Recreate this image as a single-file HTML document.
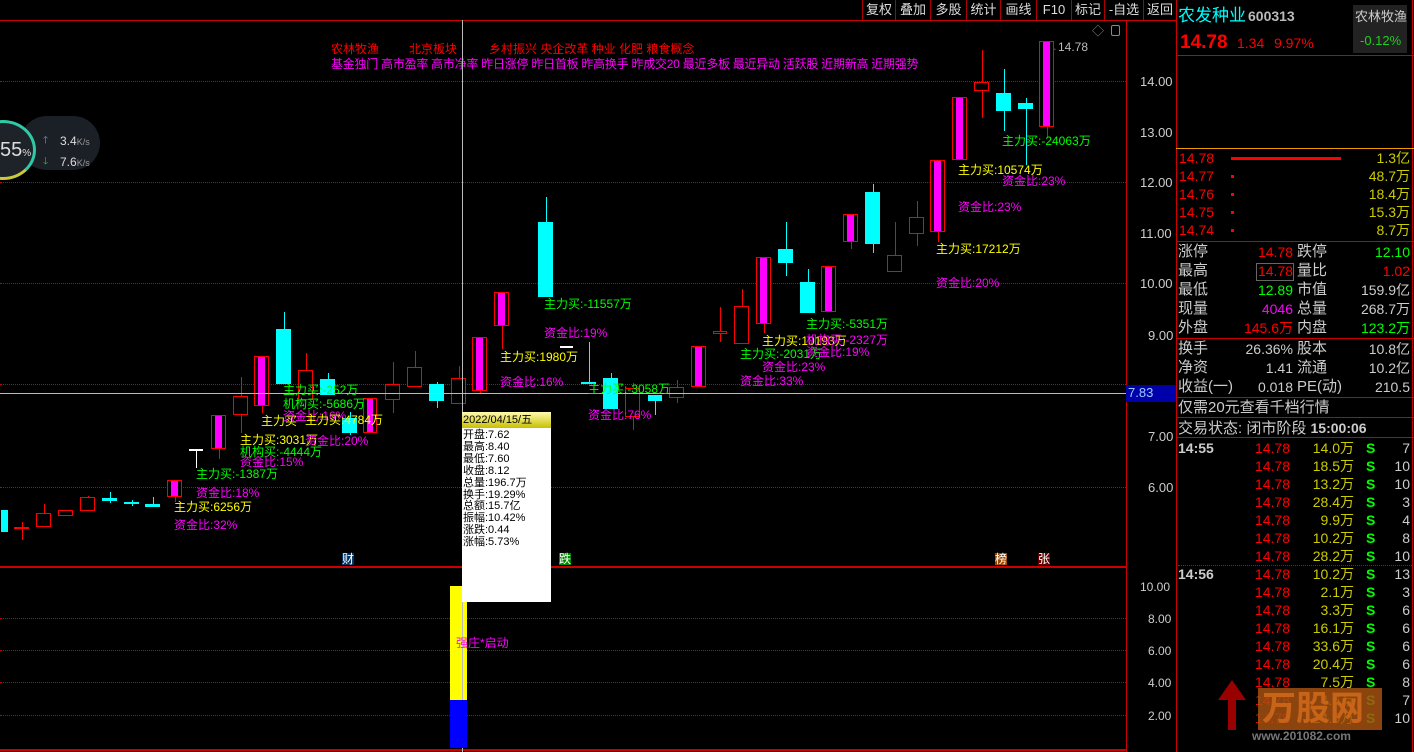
<!DOCTYPE html>
<html><head><meta charset="utf-8">
<style>
*{margin:0;padding:0;box-sizing:border-box}
body{width:1414px;height:752px;background:#000;position:relative;overflow:hidden;font-family:"Liberation Sans","Noto Sans CJK SC",sans-serif;color:#ddd}
.a{position:absolute;white-space:nowrap}
.t{position:absolute;white-space:nowrap;font-size:12px;line-height:12px}
.dot{position:absolute;height:0;border-top:1px dotted #c00}
.btn{position:absolute;top:0;height:20px;font-size:13px;line-height:20px;color:#ddd;text-align:center;border-left:1px solid #a00}
.rp{position:absolute;font-size:15px;line-height:18px;font-family:"Liberation Sans","Noto Sans CJK SC",sans-serif}
.hl{position:absolute;left:1176px;width:238px;height:1px;background:#c00}
.y{color:#ff0}.g{color:#0f0}.m{color:#f0f}.r{color:#f00}.w{color:#ccc}.c{color:#0ff}
</style></head><body>

<!-- top toolbar -->
<div class="a" style="left:0;top:20px;width:1176px;height:1px;background:#c00"></div>
<div class="btn" style="left:862px;width:33px">复权</div>
<div class="btn" style="left:895px;width:35px">叠加</div>
<div class="btn" style="left:930px;width:36px">多股</div>
<div class="btn" style="left:966px;width:34px">统计</div>
<div class="btn" style="left:1000px;width:36px">画线</div>
<div class="btn" style="left:1036px;width:35px">F10</div>
<div class="btn" style="left:1071px;width:33px">标记</div>
<div class="btn" style="left:1104px;width:39px">-自选</div>
<div class="btn" style="left:1143px;width:33px">返回</div>

<!-- axis lines -->
<div class="a" style="left:1126px;top:20px;width:1px;height:732px;background:#c00"></div>
<div class="a" style="left:1176px;top:0;width:1px;height:752px;background:#c00"></div>
<div class="a" style="left:1412px;top:0;width:1px;height:752px;background:#c00"></div>
<div class="a" style="left:0;top:566px;width:1126px;height:2px;background:#c00"></div>
<div class="a" style="left:0;top:749px;width:1126px;height:2px;background:#c00"></div>

<!-- grid -->
<div class="dot" style="left:0;top:81px;width:1126px"></div>
<div class="dot" style="left:0;top:182px;width:1126px"></div>
<div class="dot" style="left:0;top:283px;width:1126px"></div>
<div class="dot" style="left:0;top:384px;width:1126px"></div>
<div class="dot" style="left:0;top:487px;width:1126px"></div>
<div class="dot" style="left:0;top:618px;width:1126px"></div>
<div class="dot" style="left:0;top:650px;width:1126px"></div>
<div class="dot" style="left:0;top:682px;width:1126px"></div>
<div class="dot" style="left:0;top:715px;width:1126px"></div>

<!-- axis labels -->
<div class="t w" style="left:1140px;top:76px;font-size:13px">14.00</div>
<div class="t w" style="left:1140px;top:127px;font-size:13px">13.00</div>
<div class="t w" style="left:1140px;top:177px;font-size:13px">12.00</div>
<div class="t w" style="left:1140px;top:228px;font-size:13px">11.00</div>
<div class="t w" style="left:1140px;top:278px;font-size:13px">10.00</div>
<div class="t w" style="left:1148px;top:330px;font-size:13px">9.00</div>
<div class="t w" style="left:1148px;top:431px;font-size:13px">7.00</div>
<div class="t w" style="left:1148px;top:482px;font-size:13px">6.00</div>
<div class="a" style="left:1126px;top:385px;width:50px;height:17px;background:#00a"></div>
<div class="t" style="left:1128px;top:387px;color:#9cf;font-size:13px">7.83</div>
<div class="t w" style="left:1140px;top:581px">10.00</div>
<div class="t w" style="left:1148px;top:613px">8.00</div>
<div class="t w" style="left:1148px;top:645px">6.00</div>
<div class="t w" style="left:1148px;top:677px">4.00</div>
<div class="t w" style="left:1148px;top:710px">2.00</div>

<!-- tags -->
<div class="t r" style="left:331px;top:43px">农林牧渔</div>
<div class="t r" style="left:409px;top:43px">北京板块</div>
<div class="t r" style="left:489px;top:43px">乡村振兴 央企改革 种业 化肥 粮食概念</div>
<div class="t m" style="left:331px;top:58px;letter-spacing:-0.25px">基金独门 高市盈率 高市净率 昨日涨停 昨日首板 昨高换手 昨成交20 最近多板 最近异动 活跃股 近期新高 近期强势</div>
<div class="t w" style="left:1092px;top:25px;color:#888">◇</div>
<div class="a" style="left:1111px;top:25px;width:9px;height:11px;border:1px solid #888;border-radius:2px"></div>
<div class="t w" style="left:1046px;top:41px;color:#bbb">←14.78</div>

<!-- speed widget -->
<div class="a" style="left:20px;top:116px;width:80px;height:54px;background:#1b1f26;border-radius:27px"></div>
<div class="a" style="left:-30px;top:120px;width:66px;height:60px;border-radius:50%;background:#1e2229;border:3px solid #2fc9a5;border-left-color:#1e2229;border-bottom-color:#c9c93a"></div>
<div class="t" style="left:0;top:140px;font-size:20px;line-height:20px;color:#ddd">55<span style="font-size:10px">%</span></div>
<div class="t" style="left:43px;top:135px;color:#3af;font-size:10px">🡑</div>
<div class="t" style="left:43px;top:156px;color:#2c2;font-size:10px">🡓</div>
<div class="t" style="left:60px;top:135px;color:#ddd">3.4<span style="font-size:9px;color:#999">K/s</span></div>
<div class="t" style="left:60px;top:156px;color:#ddd">7.6<span style="font-size:9px;color:#999">K/s</span></div>

<div id="ch"></div>

<!-- crosshair -->
<div class="a" style="left:462px;top:20px;width:1px;height:732px;background:#bbb"></div>
<div class="a" style="left:0;top:393px;width:1126px;height:1px;background:#bbb"></div>

<!-- annotations -->
<div id="an"></div>

<!-- info box -->
<div class="a" style="left:462px;top:412px;width:89px;height:190px;background:#fff"></div>
<div class="a" style="left:462px;top:412px;width:89px;height:16px;background:linear-gradient(#fffbb0,#c8c000)"></div>
<div class="t" style="left:463px;top:414px;color:#000;font-size:11px">2022/04/15/五</div>
<div class="a" style="left:463px;top:430px;color:#000;font-size:11px;line-height:11.9px;white-space:pre">开盘:7.62
最高:8.40
最低:7.60
收盘:8.12
总量:196.7万
换手:19.29%
总额:15.7亿
振幅:10.42%
涨跌:0.44
涨幅:5.73%</div>

<!-- markers -->
<div class="t" style="left:342px;top:553px;background:#036;color:#fff">财</div>
<div class="t" style="left:559px;top:553px;background:#080;color:#fff">跌</div>
<div class="t" style="left:995px;top:553px;background:#940;color:#fff">榜</div>
<div class="t" style="left:1038px;top:553px;background:#600;color:#fff">张</div>

<!-- bottom bars -->
<div class="a" style="left:450px;top:586px;width:12px;height:114px;background:#ff0"></div>
<div class="a" style="left:463px;top:602px;width:4px;height:98px;background:#ff0"></div>
<div class="a" style="left:450px;top:700px;width:17px;height:48px;background:#00f"></div>
<div class="t m" style="left:456px;top:637px">强庄*启动</div>

<!-- right panel -->
<div class="rp c" style="left:1178px;top:6px;font-size:17px;line-height:20px">农发种业</div>
<div class="rp w" style="left:1248px;top:7px;font-size:14px;font-weight:bold;color:#bbb">600313</div>
<div class="a" style="left:1353px;top:5px;width:54px;height:48px;background:#222"></div>
<div class="rp w" style="left:1355px;top:8px;font-size:13px">农林牧渔</div>
<div class="rp g" style="left:1360px;top:32px;font-size:13px;color:#2c2">-0.12%</div>
<div class="rp r" style="left:1180px;top:32px;font-size:19px;font-weight:bold;line-height:22px">14.78</div>
<div class="rp r" style="left:1237px;top:34px;font-size:14px">1.34</div>
<div class="rp r" style="left:1274px;top:34px;font-size:14px">9.97%</div>
<div class="hl" style="top:55px"></div>
<div class="hl" style="top:148px;background:#e90"></div>

<div id="rp"></div>
<div class="hl" style="top:241px"></div>
<div class="hl" style="top:338px"></div>
<div class="hl" style="top:397px"></div>
<div class="hl" style="top:417px"></div>
<div class="hl" style="top:437px"></div>
<div class="a" style="left:1178px;top:565px;width:234px;border-top:1px dotted #c00"></div>
<div class="a" style="left:1231px;top:157px;width:110px;height:3px;background:#f00"></div>

<!-- watermark -->
<div class="a" style="left:1258px;top:688px;width:124px;height:42px;background:#a55010;opacity:.85"></div>
<div class="t" style="left:1262px;top:690px;font-size:34px;line-height:38px;color:#c86418;font-weight:bold">万股网</div>
<div class="t" style="left:1252px;top:730px;font-size:12px;color:#777;font-weight:bold">www.201082.com</div>
<div class="a" style="left:1218px;top:680px;width:0;height:0;border-left:14px solid transparent;border-right:14px solid transparent;border-bottom:20px solid #900"></div>
<div class="a" style="left:1228px;top:700px;width:8px;height:30px;background:#900"></div>

<script>
var C=[[0,9,'c',510,532,510,532],[13,30,'l',527,529,522,540],[35,52,'r',513,527,504,527],[57,74,'r',510,516,510,516],[79,96,'r',497,511,496,511],[101,118,'c',498,501,492,503],[123,140,'c',502,504,500,506],[144,161,'c',504,507,497,507],[166,183,'m',480,497,480,502],[188,204,'w',449,450,449,468],[210,227,'m',415,449,415,459],[232,249,'r',396,415,377,433],[253,270,'m',356,406,356,413],[275,292,'c',329,384,312,384],[297,314,'r',370,400,353,400],[319,336,'c',379,395,373,395],[341,358,'c',418,433,412,435],[362,378,'m',398,433,398,433],[384,401,'r',384,400,362,413],[406,423,'r',367,387,351,387],[428,445,'c',384,401,382,408],[450,467,'r',378,404,366,404],[471,488,'m',337,391,337,394],[493,510,'m',292,326,292,349],[537,554,'c',222,297,197,297],[559,574,'w',346,347,346,347],[580,597,'c',382,384,342,384],[602,619,'c',378,409,373,409],[624,641,'r',388,417,383,430],[647,663,'c',395,401,395,415],[668,685,'r',387,398,380,403],[690,707,'m',346,387,346,387],[712,728,'r',331,334,307,342],[733,750,'r',306,344,289,344],[755,772,'m',257,324,257,333],[777,794,'c',249,263,222,276],[799,816,'c',282,313,269,313],[820,837,'m',266,312,266,312],[842,859,'m',214,242,214,249],[864,881,'c',192,244,184,253],[886,903,'r',255,272,222,272],[908,925,'r',217,234,201,246],[929,946,'m',160,232,160,242],[951,968,'m',97,160,97,160],[973,990,'r',82,91,50,118],[995,1012,'c',93,111,69,131],[1017,1034,'c',103,109,98,165],[1038,1055,'m',41,127,41,137]];
var h='';
C.forEach(function(k){var x1=k[0]+1,x2=k[1]-1,t=k[2],cx=Math.round((x1+x2)/2),w=x2-x1;
var col=t=='c'?'#0ff':(t=='w'?'#fff':'#f00');
h+='<div class="a" style="left:'+cx+'px;top:'+k[5]+'px;width:1px;height:'+(k[6]-k[5])+'px;background:'+col+'"></div>';
var hh=Math.max(k[4]-k[3],2);
if(t=='c')h+='<div class="a" style="left:'+x1+'px;top:'+k[3]+'px;width:'+w+'px;height:'+hh+'px;background:#0ff"></div>';
else if(t=='w'||t=='l')h+='<div class="a" style="left:'+x1+'px;top:'+k[3]+'px;width:'+w+'px;height:2px;background:'+col+'"></div>';
else{h+='<div class="a" style="left:'+x1+'px;top:'+k[3]+'px;width:'+w+'px;height:'+hh+'px;background:#000;border:1px solid #f00"></div>';
if(t=='m')h+='<div class="a" style="left:'+(x1+4)+'px;top:'+(k[3]+1)+'px;width:'+(w-8)+'px;height:'+(hh-2)+'px;background:#f0f"></div>';}
});
document.getElementById('ch').innerHTML=h;
var A=[[174,501,'y','主力买:6256万'],[174,519,'m','资金比:32%'],[196,468,'g','主力买:-1387万'],[196,487,'m','资金比:18%'],[240,434,'y','主力买:3031万'],[240,446,'g','机构买:-4444万'],[240,456,'m','资金比:15%'],[283,384,'g','主力买:-252万'],[283,398,'g','机构买:-5686万'],[283,410,'m','资金比:16%'],[261,415,'y','主力买'],[305,414,'y','主力买:4784万'],[305,435,'m','资金比:20%'],[544,298,'g','主力买:-11557万'],[544,327,'m','资金比:19%'],[500,351,'y','主力买:1980万'],[500,376,'m','资金比:16%'],[588,383,'g','主力买:-3058万'],[588,409,'m','资金比:76%'],[806,318,'g','主力买:-5351万'],[762,335,'y','主力买:10193万'],[806,334,'m','机构买:-2327万'],[740,348,'g','主力买:-2031万'],[806,346,'m','资金比:19%'],[762,361,'m','资金比:23%'],[740,375,'m','资金比:33%'],[936,243,'y','主力买:17212万'],[936,277,'m','资金比:20%'],[958,164,'y','主力买:10574万'],[958,201,'m','资金比:23%'],[1002,135,'g','主力买:-24063万'],[1002,175,'m','资金比:23%']];
h='';A.forEach(function(a){h+='<div class="t '+a[2]+'" style="left:'+a[0]+'px;top:'+a[1]+'px">'+a[3]+'</div>';});
document.getElementById('an').innerHTML=h;
h='';
function R(x,y,cls,txt,al,fs){h+='<div class="rp '+cls+'" style="'+(al?'right:'+(1414-x)+'px':'left:'+x+'px')+';top:'+y+'px'+(fs?';font-size:'+fs+'px':'')+'">'+txt+'</div>';}
var ob=[['14.78','1.3亿'],['14.77','48.7万'],['14.76','18.4万'],['14.75','15.3万'],['14.74','8.7万']];
ob.forEach(function(o,i){var y=149+i*18;R(1179,y,'r',o[0],0,14);h+='<div class="rp" style="right:4px;top:'+y+'px;color:#cc0;font-size:14px">'+o[1]+'</div>';if(i)h+='<div class="a" style="left:1231px;top:'+(y+8)+'px;width:3px;height:3px;background:#f00"></div>';});
var st=[['涨停','14.78','r','跌停','12.10','g'],['最高','14.78','r','量比','1.02','r'],['最低','12.89','g','市值','159.9亿','w'],['现量','4046','m','总量','268.7万','w'],['外盘','145.6万','r','内盘','123.2万','g']];
st.forEach(function(s,i){var y=243+i*19;R(1178,y,'w',s[0]);R(1293,y,s[2],s[1],1,14);R(1297,y,'w',s[3]);R(1410,y,s[5],s[4],1,14);});
h+='<div class="a" style="left:1256px;top:263px;width:38px;height:18px;border:1px solid #666"></div>';
var s2=[['换手','26.36%','股本','10.8亿'],['净资','1.41','流通','10.2亿'],['收益(一)','0.018','PE(动)','210.5']];
s2.forEach(function(s,i){var y=340+i*19;R(1178,y,'w',s[0]);R(1293,y,'w',s[1],1,14);R(1297,y,'w',s[2]);R(1410,y,'w',s[3],1,14);});
R(1178,399,'w','仅需20元查看千档行情');
R(1178,419,'w','交易状态: 闭市阶段 <b style="font-size:14px">15:00:06</b>');
var tk=[['14:55','14.0万',7],['','18.5万',10],['','13.2万',10],['','28.4万',3],['','9.9万',4],['','10.2万',8],['','28.2万',10],['14:56','10.2万',13],['','2.1万',3],['','3.3万',6],['','16.1万',6],['','33.6万',6],['','20.4万',6],['','7.5万',8],['','4.6万',7],['','24.5万',10]];
tk.forEach(function(t,i){var y=439+i*18;if(t[0])R(1178,y,'w','<b>'+t[0]+'</b>',0,14);R(1290,y,'r','14.78',1,14);R(1354,y,'',''+'<span style="color:#cc0">'+t[1]+'</span>',1,14);R(1366,y,'g','<b>S</b>',0,14);R(1410,y,'w',t[2],1,14);});
document.getElementById('rp').innerHTML=h;
</script>
</body></html>
